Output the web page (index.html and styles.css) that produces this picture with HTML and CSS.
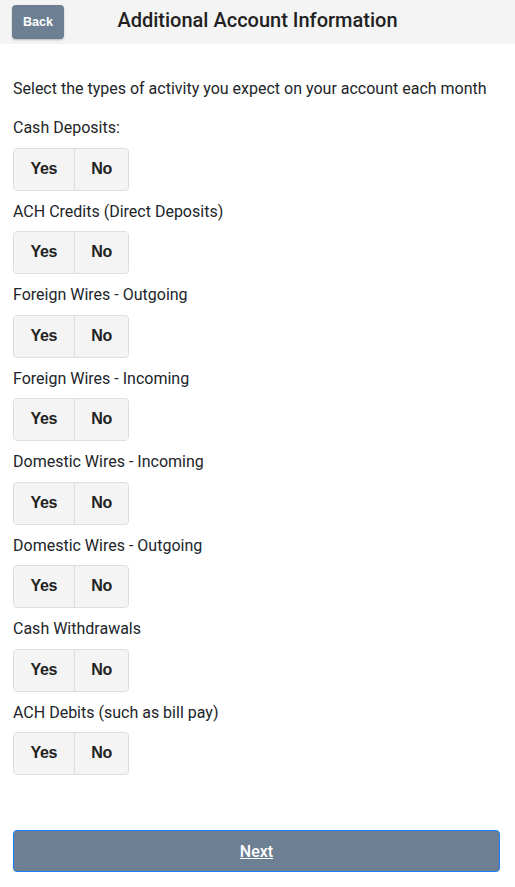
FILE: index.html
```html
<!DOCTYPE html>
<html lang="en">
<head>
<meta charset="utf-8">
<title>Additional Account Information</title>
<link rel="stylesheet" href="styles.css">
</head>
<body>
<header class="topbar">
  <div class="topbar-left"><button class="back-btn" type="button">Back</button></div>
  <h1 class="title">Additional Account Information</h1>
  <div class="topbar-right"></div>
</header>
<main class="content">
  <p class="intro">Select the types of activity you expect on your account each month</p>
  <div class="questions">
    <div class="question">
      <div class="label">Cash Deposits:</div>
      <div class="toggle"><button class="opt" type="button">Yes</button><button class="opt" type="button">No</button></div>
    </div>
    <div class="question">
      <div class="label">ACH Credits (Direct Deposits)</div>
      <div class="toggle"><button class="opt" type="button">Yes</button><button class="opt" type="button">No</button></div>
    </div>
    <div class="question">
      <div class="label">Foreign Wires - Outgoing</div>
      <div class="toggle"><button class="opt" type="button">Yes</button><button class="opt" type="button">No</button></div>
    </div>
    <div class="question">
      <div class="label">Foreign Wires - Incoming</div>
      <div class="toggle"><button class="opt" type="button">Yes</button><button class="opt" type="button">No</button></div>
    </div>
    <div class="question">
      <div class="label">Domestic Wires - Incoming</div>
      <div class="toggle"><button class="opt" type="button">Yes</button><button class="opt" type="button">No</button></div>
    </div>
    <div class="question">
      <div class="label">Domestic Wires - Outgoing</div>
      <div class="toggle"><button class="opt" type="button">Yes</button><button class="opt" type="button">No</button></div>
    </div>
    <div class="question">
      <div class="label">Cash Withdrawals</div>
      <div class="toggle"><button class="opt" type="button">Yes</button><button class="opt" type="button">No</button></div>
    </div>
    <div class="question">
      <div class="label">ACH Debits (such as bill pay)</div>
      <div class="toggle"><button class="opt" type="button">Yes</button><button class="opt" type="button">No</button></div>
    </div>
  </div>
  <button class="next-btn" type="button"><span>Next</span></button>
</main>
</body>
</html>
```
FILE: styles.css
```css
* { box-sizing: border-box; }
html, body { margin: 0; padding: 0; background: #ffffff; }
body {
  font-family: Roboto, "Liberation Sans", Arial, sans-serif;
  color: #212529;
  font-size: 16px;
  line-height: 24px;
}
.topbar {
  display: grid;
  grid-template-columns: 1fr auto 1fr;
  align-items: start;
  height: 44px;
  padding: 5px 12px 0 12px;
  background: #f4f4f4;
}
.back-btn {
  width: 52px;
  height: 34px;
  padding: 0;
  border: none;
  border-radius: 4px;
  background: #6c7f93;
  color: #ffffff;
  font-family: "Liberation Sans", Arial, sans-serif;
  font-weight: bold;
  font-size: 12.5px;
  box-shadow: 0 1px 2px rgba(0,0,0,0.25);
}
.title {
  margin: 3px 0 0 0;
  font-size: 20px;
  line-height: 24px;
  font-weight: 500;
  color: #222222;
}
.content {
  padding: 33px 15px 0 13px;
}
.intro {
  margin: 0 0 15px 0;
}
.questions {
  display: flex;
  flex-direction: column;
  gap: 9px;
}
.label {
  margin-bottom: 7.5px;
}
.toggle {
  display: inline-flex;
  height: 43px;
  border: 1px solid #dedede;
  border-radius: 4px;
  background: #f4f4f4;
  overflow: hidden;
}
.opt {
  padding: 0 16.5px 1px 16.5px;
  border: none;
  background: #f4f4f4;
  color: #222222;
  font-family: "Liberation Sans", Arial, sans-serif;
  font-weight: bold;
  font-size: 16px;
  letter-spacing: -0.3px;
}
.opt + .opt {
  border-left: 1px solid #dedede;
}
.next-btn {
  display: block;
  width: 100%;
  height: 42px;
  margin-top: 55px;
  border: 1px solid #1a7ff0;
  border-radius: 4px;
  background: #6c7f93;
  color: #ffffff;
  font-family: Roboto, "Liberation Sans", Arial, sans-serif;
  font-size: 16px;
  font-weight: 500;
}
.next-btn span {
  text-decoration: underline;
}
```
